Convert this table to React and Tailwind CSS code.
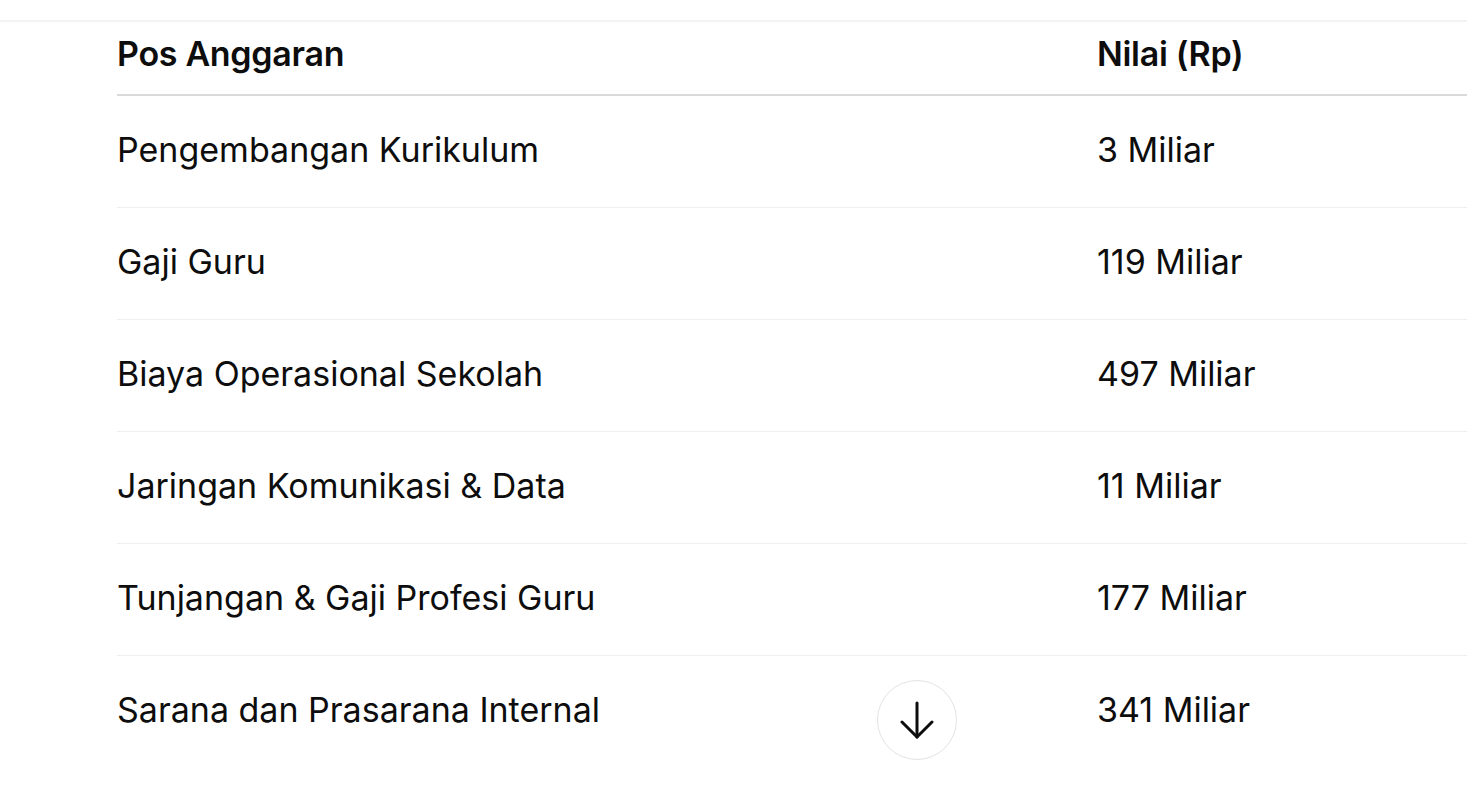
import React from "react";

const rows = [
  { pos: "Pengembangan Kurikulum", nilai: "3 Miliar" },
  { pos: "Gaji Guru", nilai: "119 Miliar" },
  { pos: "Biaya Operasional Sekolah", nilai: "497 Miliar" },
  { pos: "Jaringan Komunikasi & Data", nilai: "11 Miliar" },
  { pos: "Tunjangan & Gaji Profesi Guru", nilai: "177 Miliar" },
  { pos: "Sarana dan Prasarana Internal", nilai: "341 Miliar" },
];

const App = () => {
  return (
    <div className="relative w-[1467px] h-[810px] overflow-hidden bg-white font-['Inter',sans-serif] text-[#0d0d0d]">
      <div className="mt-[20px] border-t-2 border-[#f3f3f3] pl-[117px]">
        <table className="w-[1350px] border-collapse text-left">
          <thead>
            <tr className="h-[73px] border-b-2 border-[#dadada]">
              <th className="w-[980px] p-0 pb-[10px] text-[34px] font-semibold tracking-[-0.3px]">Pos Anggaran</th>
              <th className="p-0 pb-[10px] text-[34px] font-semibold tracking-[-0.3px]">Nilai (Rp)</th>
            </tr>
          </thead>
          <tbody>
            {rows.map((r, i) => (
              <tr key={r.pos} className={i < rows.length - 1 ? "h-[112px] border-b border-[#efefef]" : "h-[112px]"}>
                <td className="p-0 pb-[4px] text-[34px] font-normal">{r.pos}</td>
                <td className="p-0 pb-[4px] text-[34px] font-normal">{r.nilai}</td>
              </tr>
            ))}
          </tbody>
        </table>
      </div>
      <button className="absolute left-[877px] top-[680px] flex h-[80px] w-[80px] items-center justify-center rounded-full border border-[#e3e3e3] bg-white">
        <svg width="34" height="38" viewBox="0 0 34 38" fill="none" stroke="#0d0d0d" strokeWidth="3" strokeLinecap="round" strokeLinejoin="round">
          <path d="M17 2v34" />
          <path d="M2 21l15 15 15-15" />
        </svg>
      </button>
    </div>
  );
};

export default App;
